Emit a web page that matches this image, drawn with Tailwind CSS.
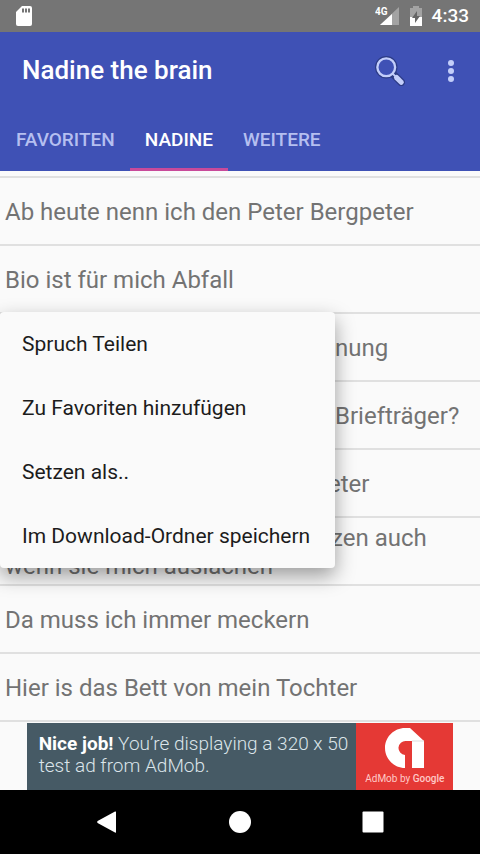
<!DOCTYPE html>
<html lang="de">
<head>
<meta charset="utf-8">
<meta name="viewport" content="width=device-width, initial-scale=1">
<title>Nadine the brain</title>
<script src="https://cdn.jsdelivr.net/npm/@tailwindcss/browser@4"></script>
</head>
<body class="flex min-h-screen flex-col bg-[#fafafa] font-['Roboto',sans-serif]">
  <div class="flex h-8 items-center justify-between bg-[#757575] pr-[11px] pl-4 text-white">
    <svg class="h-5 w-4" viewBox="0 0 16 20" aria-label="SD-Karte"><path fill="#fff" d="M6 0h8q2 0 2 2v16q0 2-2 2H2q-2 0-2-2V6z"/><path stroke="#757575" stroke-width="2" d="M7 2.5v4M10 2.5v4M13 2.5v4"/></svg>
    <div class="flex items-center">
      <svg class="h-5 w-6" viewBox="0 0 24 20" aria-label="4G"><path fill="#a3a3a3" d="M24 1v18H5z"/><path fill="#fff" d="M17 8v11H5z"/><text x="0" y="9" font-size="10" font-weight="700" fill="#fff" font-family="Roboto">4G</text></svg>
      <svg class="ml-[11px] h-5 w-3" viewBox="0 0 12 20" aria-label="Akku"><path fill="#a3a3a3" d="M3 0h6v2h3v18H0V2h3z"/><path fill="#fff" d="M0 11h12v9H0z"/><path fill="#666" d="M7 5 2 12h3v5l5-7H7z"/></svg>
      <span class="ml-[10px] text-[19px] leading-8 font-medium">4:33</span>
    </div>
  </div>

  <header class="bg-[#3f51b5] text-white">
    <div class="flex h-[75px] items-center pt-0.5 pr-[15px] pl-[22px]">
      <h1 class="flex-1 text-[26px] font-medium">Nadine the brain</h1>
      <button type="button" aria-label="Suchen" class="mr-8"><svg class="h-[30px] w-[30px]" viewBox="0 0 32 32" fill="none"><circle cx="12" cy="12" r="9.5" stroke="#2c3b85" stroke-width="5"/><path d="m19 19 9 9" stroke="#2c3b85" stroke-width="8" stroke-linecap="round"/><path d="m18 18 4 4" stroke="#c3cefa" stroke-width="2"/><circle cx="12" cy="12" r="9.5" fill="#3f51b5" stroke="#c3cefa" stroke-width="2.5"/><path d="m23 23 5 5" stroke="#c3cefa" stroke-width="5.5" stroke-linecap="round"/></svg></button>
      <button type="button" aria-label="Mehr Optionen" class="px-2"><svg class="h-6 w-3" viewBox="0 0 12 24" fill="#c3cefa"><circle cx="6" cy="4" r="3"/><circle cx="6" cy="12" r="3"/><circle cx="6" cy="20" r="3"/></svg></button>
    </div>
    <nav class="flex h-16 pl-px text-[19px] font-medium text-[#b5bff0]">
      <a href="#favoriten" class="flex items-center px-[15px] pt-0.5">FAVORITEN</a>
      <a href="#nadine" aria-current="page" class="flex items-center border-y-3 border-t-transparent border-b-[#c84a9a] px-[15px] pt-0.5 text-white">NADINE</a>
      <a href="#weitere" class="flex items-center px-[15px] pt-0.5">WEITERE</a>
    </nav>
  </header>

  <main class="relative flex-1">
    <ul class="pt-[5px] text-2xl leading-7 text-[#737373] [&>li]:flex [&>li]:h-[68px] [&>li]:items-center [&>li]:border-t-2 [&>li]:border-[#e0e0e0] [&>li]:px-[5px] [&>li]:pt-0.5">
      <li>Ab heute nenn ich den Peter Bergpeter</li>
      <li>Bio ist für mich Abfall</li>
      <li><span class="pl-[330px]">nung</span></li>
      <li><span class="pl-[330px]">Briefträger?</span></li>
      <li><span class="pl-[308px]">Peter</span></li>
      <li><span><span class="pl-[326px]">zen auch</span><br>wenn sie mich auslachen</span></li>
      <li>Da muss ich immer meckern</li>
      <li>Hier is das Bett von mein Tochter</li>
    </ul>
    <hr class="border-t-2 border-[#e0e0e0]">
    <div role="menu" class="absolute top-[141px] left-0 flex w-[335px] flex-col rounded-sm bg-[#fafafa] text-[21px] text-[#1c1c1c] shadow-[0_8px_20px_rgba(0,0,0,0.38)]">
      <button type="button" role="menuitem" class="h-16 px-[22px] pt-0.5 text-left">Spruch Teilen</button>
      <button type="button" role="menuitem" class="h-16 px-[22px] pt-0.5 text-left">Zu Favoriten hinzufügen</button>
      <button type="button" role="menuitem" class="h-16 px-[22px] pt-0.5 text-left">Setzen als..</button>
      <button type="button" role="menuitem" class="h-16 px-[22px] pt-0.5 text-left">Im Download-Ordner speichern</button>
    </div>
  </main>

  <a href="#admob" class="mx-auto flex h-[67px] w-8/9 bg-[#465a65] text-[#dbe5ea]">
    <p class="flex-1 pt-2.5 pl-3 text-[19px] leading-[22px] font-light whitespace-nowrap"><b class="font-bold text-white">Nice job!</b> You’re displaying a 320 x 50<br>test ad from AdMob.</p>
    <div class="flex w-[97px] shrink-0 flex-col items-center bg-[#e53935] pt-1 text-[#ffc9c7]">
      <svg class="h-11 w-11" viewBox="0 0 44 44" aria-label="AdMob"><path fill="#fff" d="M22 1h5l14 13v27H29V14h-6a7 7 0 0 0-1 14v13C11 41 2 32 2 21S11 1 22 1z"/><path stroke="#ddd" d="M29 14h12"/></svg>
      <span class="text-[10px] leading-4 whitespace-nowrap">AdMob by <span class="font-medium">Google</span></span>
    </div>
  </a>

  <nav aria-label="System" class="flex h-16 items-center justify-around bg-black px-[40px]">
    <button type="button" aria-label="Zurück"><svg class="h-6 w-6" viewBox="0 0 24 24" fill="#fff"><path d="M21 2v20q0 1-1 .4L2.600 13q-1-1 0-2L20 1.600q1-.6 1 .4z"/></svg></button>
    <button type="button" aria-label="Startseite"><svg class="h-6 w-6" viewBox="0 0 24 24" fill="#fff"><circle cx="12" cy="12" r="11"/></svg></button>
    <button type="button" aria-label="Übersicht"><svg class="h-6 w-6" viewBox="0 0 24 24" fill="#fff"><rect x="1.500" y="1.500" width="21" height="21" rx="1"/></svg></button>
  </nav>
</body>
</html>
